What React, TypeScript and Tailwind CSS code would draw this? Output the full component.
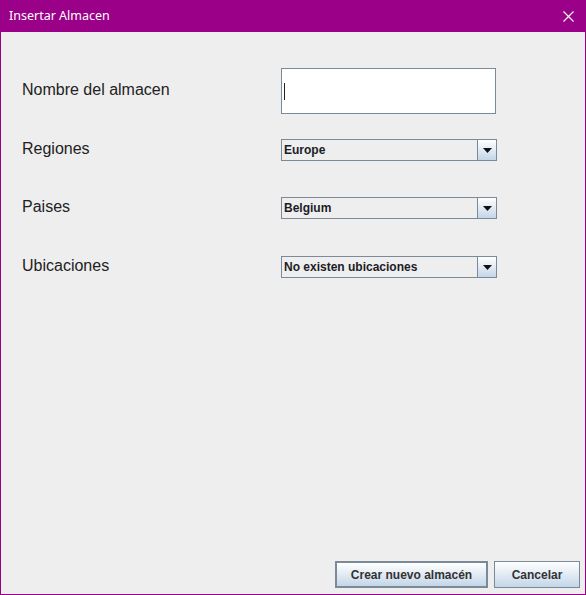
const Combo = ({ value }: { value: string }) => {
  return (
    <div className="flex h-[22px] w-[216px] border border-[#7a8a99] bg-[#eeeeee]">
      <div className="flex flex-1 items-center pl-[2px] text-[12px] font-bold text-[#1c1c28]">
        {value}
      </div>
      <div className="flex w-[19px] items-center justify-center border-l border-[#7a8a99] bg-gradient-to-b from-[#ffffff] to-[#c4d6e8]">
        <svg width="9" height="5" viewBox="0 0 9 5">
          <path d="M0 0h9L4.5 5z" fill="#111" />
        </svg>
      </div>
    </div>
  );
};

const Row = ({
  label,
  children,
  className,
}: {
  label: string;
  children: React.ReactNode;
  className: string;
}) => (
  <div className={`flex items-center ${className}`}>
    <div className="mb-[2px] w-[280px] shrink-0 pl-[21px] text-[16px] text-[#222]">{label}</div>
    {children}
  </div>
);

const App = () => {
  return (
    <div
      className="flex h-[595px] w-[586px] flex-col border-x border-b border-[#9b0089] bg-[#eeeeee]"
      style={{ fontFamily: '"Liberation Sans", Arial, sans-serif' }}
    >
      <div className="flex h-[32px] shrink-0 items-center justify-between bg-[#9b0089] pl-[8px] pr-[11px]">
        <span
          className="text-[12.5px] text-white"
          style={{ fontFamily: '"Noto Sans", "Open Sans", sans-serif' }}
        >
          Insertar Almacen
        </span>
        <svg width="11" height="11" viewBox="0 0 11 11">
          <path d="M0.5 0.5L10.5 10.5M10.5 0.5L0.5 10.5" stroke="#fff" strokeWidth="1.1" />
        </svg>
      </div>

      <div className="flex flex-1 flex-col pt-[36px]">
        <Row label="Nombre del almacen" className="h-[46px]">
          <div className="flex h-[46px] w-[215px] items-center border border-[#7a8a99] bg-white pl-[2px]">
            <div className="h-[17px] w-px bg-[#222]" />
          </div>
        </Row>
        <Row label="Regiones" className="mt-[25px] h-[22px]">
          <Combo value="Europe" />
        </Row>
        <Row label="Paises" className="mt-[36px] h-[22px]">
          <Combo value="Belgium" />
        </Row>
        <Row label="Ubicaciones" className="mt-[37px] h-[22px]">
          <Combo value="No existen ubicaciones" />
        </Row>

        <div className="mt-auto flex justify-end gap-[6px] pb-[6px] pr-[5px]">
          <button className="h-[27px] w-[153px] border-2 border-[#7a8a99] bg-gradient-to-b from-[#ffffff] to-[#c4d6e8] text-[12px] font-bold text-[#333]">
            Crear nuevo almacén
          </button>
          <button className="h-[27px] w-[86px] border border-[#7a8a99] bg-gradient-to-b from-[#ffffff] to-[#c4d6e8] text-[12px] font-bold text-[#333]">
            Cancelar
          </button>
        </div>
      </div>
    </div>
  );
};

export default App;
